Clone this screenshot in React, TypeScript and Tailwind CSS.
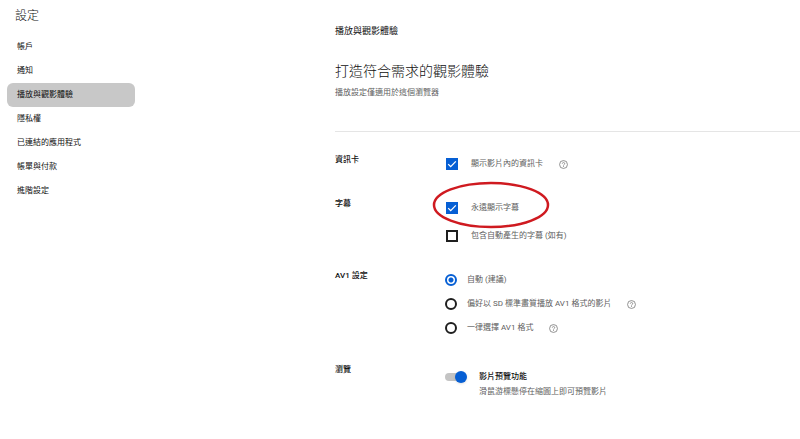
import { useState } from 'react'
import type { ReactNode } from 'react'
import clsx from 'clsx'

const NAV_ITEMS = [
  '帳戶',
  '通知',
  '播放與觀影體驗',
  '隱私權',
  '已連結的應用程式',
  '帳單與付款',
  '進階設定',
]

const AV1_OPTIONS = [
  { value: 'auto', label: '自動 (建議)', help: false },
  { value: 'sd', label: '偏好以 SD 標準畫質播放 AV1 格式的影片', help: true },
  { value: 'always', label: '一律選擇 AV1 格式', help: true },
]

function HelpButton() {
  return (
    <button type="button" aria-label="說明" className="ml-4 text-[#707070]">
      <svg viewBox="0 0 24 24" className="size-[9px]" fill="none" stroke="currentColor" strokeWidth="2">
        <circle cx="12" cy="12" r="10.5" />
        <path d="M8.8 9.6a3.2 3.2 0 1 1 4.9 2.7c-1.1.7-1.7 1.2-1.7 2.4" />
        <path d="M12 16.4v2.2" />
      </svg>
    </button>
  )
}

function Section({ title, className, children }: { title: string; className?: string; children: ReactNode }) {
  return (
    <section className={clsx('flex items-start', className)}>
      <h2 className="w-[110px] shrink-0 text-[8px] leading-4 font-medium text-[#0f0f0f]">{title}</h2>
      <div className="min-w-0 flex-1 pt-1">{children}</div>
    </section>
  )
}

function Checkbox({ label, defaultChecked }: { label: string; defaultChecked?: boolean }) {
  return (
    <label className="flex h-4 items-center gap-[13px] pl-px">
      <span className="grid size-3 shrink-0">
        <input
          type="checkbox"
          defaultChecked={defaultChecked}
          className="peer col-start-1 row-start-1 size-3 appearance-none border-2 border-[#1f1f1f] checked:border-[#065fd4] checked:bg-[#065fd4]"
        />
        <svg
          viewBox="0 0 12 12"
          className="pointer-events-none invisible col-start-1 row-start-1 size-3 peer-checked:visible"
          fill="none"
          stroke="white"
          strokeWidth="1.3"
        >
          <path d="M2.2 6.1l2.5 2.5 5.1-5.2" />
        </svg>
      </span>
      <span>{label}</span>
    </label>
  )
}

export default function App() {
  const [active, setActive] = useState('播放與觀影體驗')
  const [av1, setAv1] = useState('auto')

  return (
    <div className="flex bg-white font-[Roboto,'Noto_Sans_CJK_TC',sans-serif]">
      <aside className="w-[335px] shrink-0 pt-2 pl-[7px]">
        <h1 className="pl-2 text-[12px] leading-4 font-light text-[#0f0f0f]">設定</h1>
        <nav className="mt-[11px] w-32">
          <ul>
            {NAV_ITEMS.map((item) => (
              <li key={item}>
                <a
                  href="#"
                  onClick={() => setActive(item)}
                  className={clsx(
                    'flex h-6 items-center rounded-md pl-[10px] text-[8px] text-[#0f0f0f]',
                    item === active && 'bg-[#c8c8c8]',
                  )}
                >
                  {item}
                </a>
              </li>
            ))}
          </ul>
        </nav>
      </aside>

      <main className="min-w-0 flex-1 pt-[23px] pb-10 text-[8px] leading-4 text-[#606060]">
        <p className="text-[9px] text-[#0f0f0f]">播放與觀影體驗</p>
        <h2 className="mt-5 text-[14px] leading-6 font-light text-[#0f0f0f]">打造符合需求的觀影體驗</h2>
        <p className="mt-[2px]">播放設定僅適用於這個瀏覽器</p>

        <div className="mt-[30px] flex flex-col gap-6 border-t border-[#e5e5e5] pt-5">
          <Section title="資訊卡">
            <div className="flex items-center">
              <Checkbox label="顯示影片內的資訊卡" defaultChecked />
              <HelpButton />
            </div>
          </Section>

          <Section title="字幕">
            <div className="flex flex-col gap-3">
              <div className="relative">
                <Checkbox label="永遠顯示字幕" defaultChecked />
                {/* hand-drawn highlight around the option */}
                <svg
                  viewBox="0 0 118 48"
                  className="pointer-events-none absolute -top-[19px] -left-[13px] h-12 w-[118px]"
                  fill="none"
                  stroke="#cf1a20"
                  strokeWidth="2.5"
                >
                  <ellipse cx="59" cy="24" rx="57" ry="22" />
                </svg>
              </div>
              <Checkbox label="包含自動產生的字幕 (如有)" />
            </div>
          </Section>

          <Section title="AV1 設定">
            <div className="flex flex-col gap-2">
              {AV1_OPTIONS.map((opt) => (
                <div key={opt.value} className="flex h-4 items-center">
                  <label className="flex items-center gap-[10px]">
                    <input
                      type="radio"
                      name="av1"
                      value={opt.value}
                      checked={av1 === opt.value}
                      onChange={() => setAv1(opt.value)}
                      className="size-3 shrink-0 appearance-none rounded-full border-2 border-[#1f1f1f] checked:border-[#065fd4] checked:bg-[radial-gradient(circle,#065fd4_2px,white_3px)]"
                    />
                    <span>{opt.label}</span>
                  </label>
                  {opt.help && <HelpButton />}
                </div>
              ))}
            </div>
          </Section>

          <Section title="瀏覽" className="pt-[2px]">
            <label className="flex items-start gap-3 pt-[3px]">
              <span className="grid h-4 w-[22px] shrink-0 items-center">
                <input
                  type="checkbox"
                  role="switch"
                  defaultChecked
                  className="peer col-start-1 row-start-1 h-2 w-5 appearance-none rounded-full bg-[#c4c4c4]"
                />
                <span className="pointer-events-none col-start-1 row-start-1 size-3 rounded-full bg-[#909090] shadow-sm peer-checked:justify-self-end peer-checked:bg-[#065fd4]" />
              </span>
              <span className="flex flex-col leading-[15px]">
                <span className="font-medium text-[#0f0f0f]">影片預覽功能</span>
                <span>滑鼠游標懸停在縮圖上即可預覽影片</span>
              </span>
            </label>
          </Section>
        </div>
      </main>
    </div>
  )
}
